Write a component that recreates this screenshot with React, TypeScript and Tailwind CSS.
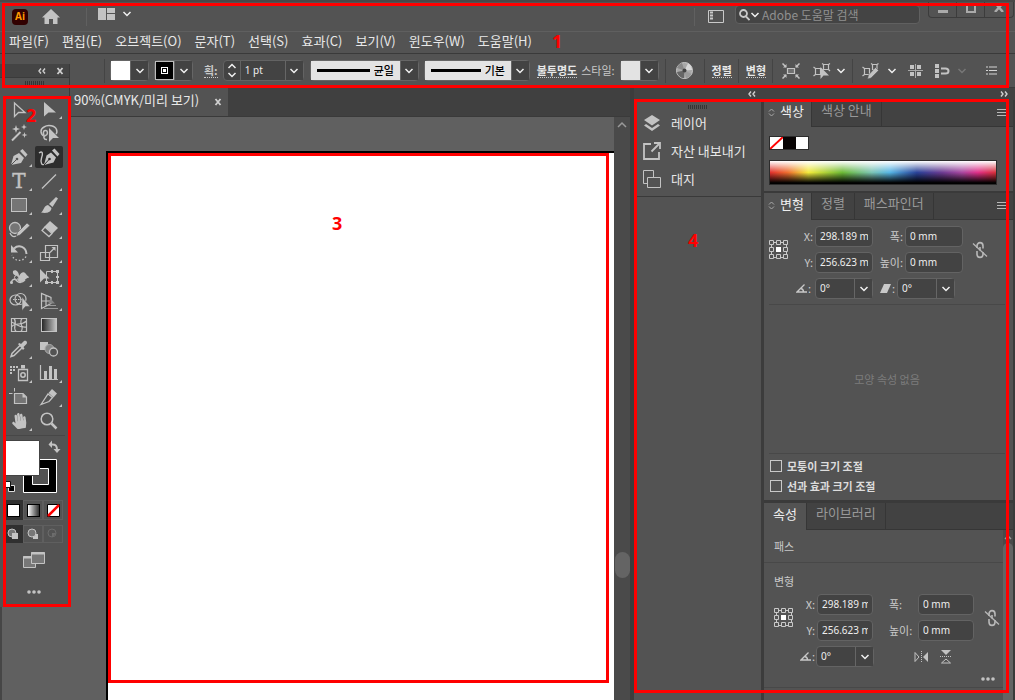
import type { ReactNode } from "react";
import clsx from "clsx";
import { FaHandPaper } from "react-icons/fa";

type Tool = {
  name: string;
  icon: ReactNode;
  more?: boolean;
  active?: boolean;
};

const C = "#c3c3c3";

const menus = [
  "파일(F)",
  "편집(E)",
  "오브젝트(O)",
  "문자(T)",
  "선택(S)",
  "효과(C)",
  "보기(V)",
  "윈도우(W)",
  "도움말(H)",
];

const tools: Tool[] = [
  {
    name: "선택 도구",
    icon: <path d="M10.5 6V19.5L14.5 15.5H21Z" fill="none" stroke={C} strokeWidth="1.3" />,
  },
  { name: "직접 선택 도구", more: true, icon: <path d="M10 5V19.5L14.5 15.5H22Z" /> },
  {
    name: "자동 선택 도구",
    icon: (
      <>
        <path d="M8 19.5L16.5 11" stroke={C} strokeWidth="2" />
        <path d="M12 4L13 7L16 8L13 9L12 12L11 9L8 8L11 7ZM20 3L20.8 5.2L23 6L20.8 6.8L20 9L19.2 6.8L17 6L19.2 5.2ZM20.500 11L21.200 13.300L23.500 14L21.200 14.700L20.500 17L19.800 14.700L17.500 14L19.800 13.300Z" />
      </>
    ),
  },
  {
    name: "올가미 도구",
    icon: (
      <>
        <path
          d="M10 15C6 13 6 8 10 6C14 3.500 21 4.500 22.500 8.500C23 10 23 12 22 13M10 14C8.500 11 10 9 12 9.500C14 10 14 14 11.500 14.500C9 15 9.500 19 13 18.500"
          fill="none"
          stroke={C}
          strokeWidth="1.500"
        />
        <path d="M15 7V21L19 17H25Z" />
      </>
    ),
  },
  {
    name: "펜 도구",
    more: true,
    icon: (
      <>
        <path d="M7 20L9.500 11L15 8L20 13L17 18Z" />
        <path d="M16 6L18.500 4L23.500 9.500L21.500 12Z" />
        <path d="M7 20L13 14" stroke="#535353" />
        <circle cx="13" cy="14" r="1.300" fill="#535353" />
      </>
    ),
  },
  {
    name: "곡률 도구",
    active: true,
    icon: (
      <>
        <path d="M5 8C9 5 9 9 7.500 13C6 18 8 21 11 19" fill="none" stroke={C} strokeWidth="1.400" />
        <path d="M10 20L12.500 10.500L17 7.500L22 12.500L19.500 17.500Z" />
        <path d="M18 5.500L20.500 3.500L25.500 9L23.500 11.500Z" />
        <path d="M10 20L15.500 14" stroke="#2d2d2d" />
        <circle cx="15.500" cy="14" r="1.300" fill="#2d2d2d" />
      </>
    ),
  },
  {
    name: "문자 도구",
    more: true,
    icon: (
      <text x="15" y="19" textAnchor="middle" fontFamily="DejaVu Serif, serif" fontSize="20" stroke={C} strokeWidth=".4">
        T
      </text>
    ),
  },
  { name: "선분 도구", more: true, icon: <path d="M8 19.500L22 5.500" stroke={C} strokeWidth="1.300" /> },
  {
    name: "사각형 도구",
    more: true,
    icon: <rect x="7.500" y="5.500" width="15" height="13" fill="#757575" stroke={C} />,
  },
  {
    name: "페인트브러쉬 도구",
    more: true,
    icon: (
      <>
        <path d="M22 4L24 5.500L18.500 14L15 11Z" />
        <path d="M14 12L17.500 15C17 20 12 20.500 7 19.500C10 18 9.500 12.500 14 12Z" />
      </>
    ),
  },
  {
    name: "Shaper 도구",
    more: true,
    icon: (
      <>
        <circle cx="11" cy="11" r="5.500" fill="#757575" stroke={C} strokeWidth="1.300" />
        <path d="M23 6L26 8.500L16 18L12 19.500L13.500 15.500Z" stroke="#535353" strokeWidth=".6" />
        <path d="M6 16C8 20 10 20 12 19" fill="none" stroke={C} strokeWidth="1.300" />
      </>
    ),
  },
  {
    name: "지우개 도구",
    more: true,
    icon: (
      <>
        <path d="M16 4L24 11L18.500 16.500L10.500 9.500Z" />
        <path d="M11 10L18 16.500L15 19.500L8 13.500Z" fill="none" stroke={C} strokeWidth="1.300" />
      </>
    ),
  },
  {
    name: "회전 도구",
    more: true,
    icon: (
      <>
        <path d="M10 7.500C15 3 22 6 22.500 13" fill="none" stroke={C} strokeWidth="2" />
        <path d="M7 4V11.500H14Z" />
        <path d="M22 15.500C19 21 10 21 8 14" fill="none" stroke={C} strokeWidth="1.300" strokeDasharray="1.500 2" />
      </>
    ),
  },
  {
    name: "크기 조절 도구",
    more: true,
    icon: (
      <g fill="none" stroke={C} strokeWidth="1.200">
        <path d="M11.500 4.500H23.500V16.500H11.500Z" />
        <path d="M6.500 11.500H15.500V19.500H6.500Z" />
        <path d="M16 11.500L20.500 7" />
        <path d="M17.500 6H21.500V10Z" fill={C} stroke="none" />
      </g>
    ),
  },
  {
    name: "폭 도구",
    more: true,
    icon: (
      <>
        <path d="M9 6C12 4 15 7 15 11C17 7 20 6 22 9C23 11 25 11 25 13C22 12 21 17 17 17C14 17 13 15 15 13C13 10 8 11 9 6Z" />
        <path d="M7 17.500C9 13 11 14 13 16C15 18 18 18 21 15" fill="none" stroke={C} strokeWidth="1.500" />
        <circle cx="12.500" cy="12.500" r="2" fill="#535353" stroke={C} />
        <circle cx="7.500" cy="17.500" r="1.500" />
      </>
    ),
  },
  {
    name: "자유 변형 도구",
    more: true,
    icon: (
      <>
        <path d="M12.500 6.500H23.500V17.500H12.500Z" fill="none" stroke={C} />
        <path d="M11 16H14V19H11ZM22 5H25V8H22ZM22 16H25V19H22ZM17 5H19V8H17ZM17 16H19V19H17ZM22 11H25V13H22Z" />
        <path d="M6 4V17.500L10 13.500H15.500Z" />
      </>
    ),
  },
  {
    name: "도형 구성 도구",
    more: true,
    icon: (
      <>
        <ellipse cx="11.500" cy="11" rx="5.500" ry="5" fill="none" stroke={C} strokeWidth="1.200" />
        <ellipse cx="16.500" cy="10" rx="5.500" ry="5.500" fill="none" stroke={C} strokeWidth="1.200" />
        <path d="M9 10.500H18" stroke={C} strokeDasharray="1.500 1" />
        <path d="M18 8V21.500L21.500 17.500H26Z" stroke="#535353" strokeWidth=".5" />
      </>
    ),
  },
  {
    name: "원근감 격자 도구",
    more: true,
    icon: (
      <>
        <path
          d="M7.500 4.500V19.500L17 14.500V8.500ZM12 6V17M7.500 12H17"
          fill="none"
          stroke={C}
          strokeWidth="1.200"
        />
        <path d="M17 10L21 14.500H14Z" fill="#858585" />
        <path d="M14 16.500H22M10 19.500H24" stroke="#999" />
      </>
    ),
  },
  {
    name: "망 도구",
    icon: (
      <path
        d="M7.500 5.500H22.500V18.500H7.500ZM7.500 14C12 8 16 14 22.500 8M10 5.500C14 10 8 14 12 18.500M18 5.500C14 10 21 14 17 18.500M7.500 9C13 11 15 15 22.500 14"
        fill="none"
        stroke={C}
        strokeWidth="1.200"
      />
    ),
  },
  {
    name: "그레이디언트 도구",
    icon: (
      <>
        <defs>
          <linearGradient id="tool-gradient">
            <stop stopColor="#222" />
            <stop offset="1" stopColor="#c8c8c8" />
          </linearGradient>
        </defs>
        <rect x="7.500" y="5.500" width="15" height="13" fill="url(#tool-gradient)" stroke={C} />
      </>
    ),
  },
  {
    name: "스포이드 도구",
    more: true,
    icon: (
      <>
        <path d="M16 8.500L8 16.500L7 19.500L10 18.500L18.500 10.500" fill="none" stroke={C} strokeWidth="1.500" />
        <path d="M14 7L15.500 6L17 7L20 4C22 3 24 5 22.500 7L19.500 10L20.500 11.500L19 13Z" />
      </>
    ),
  },
  {
    name: "블렌드 도구",
    icon: (
      <>
        <path d="M6 5H14V13H6Z" />
        <circle cx="15.500" cy="12" r="4.500" fill="#858585" stroke="#aaa" />
        <circle cx="19.500" cy="15" r="4" fill="#535353" stroke={C} strokeWidth="1.300" />
      </>
    ),
  },
  {
    name: "심볼 분무기 도구",
    more: true,
    icon: (
      <>
        <path d="M6 5H8V7H6ZM9 5H11V7H9ZM12 5H14V7H12ZM6 8H8V10H6ZM9 8H11V10H9ZM6 11H8V13H6ZM17 4H21V7.500H17Z" />
        <path d="M14.500 8.500H23.500V19.500H14.500Z" fill="none" stroke={C} strokeWidth="1.300" />
        <circle cx="19" cy="14" r="2.200" fill="none" stroke={C} strokeWidth="1.500" />
      </>
    ),
  },
  {
    name: "막대 그래프 도구",
    more: true,
    icon: (
      <>
        <path d="M6.500 4V18.500H24" fill="none" stroke={C} strokeWidth="1.200" />
        <path d="M10 10H13V18H10ZM15 5H18V18H15ZM20 8H23V18H20Z" />
      </>
    ),
  },
  {
    name: "대지 도구",
    icon: (
      <>
        <path d="M10.500 8.500H19L22.500 12V18.500H10.500Z" fill="#757575" stroke={C} strokeWidth="1.200" />
        <path d="M10.500 3V6.500M5 8.500H8.500" stroke={C} />
        <path d="M18.500 8.500L22.500 12.500H18.500Z" />
      </>
    ),
  },
  {
    name: "분할 영역 도구",
    more: true,
    icon: (
      <>
        <path d="M7 19.500L14 9L18.500 12.500L15 16.500Z" fill="none" stroke={C} strokeWidth="1.300" />
        <path d="M14.500 8L18 4L23 8.500L19.500 12.500Z" />
      </>
    ),
  },
  {
    name: "손 도구",
    more: true,
    icon: (
      <g transform="rotate(-8 15 12)">
        <FaHandPaper x="7" y="4" width="16" height="16" color={C} />
      </g>
    ),
  },
  {
    name: "돋보기 도구",
    icon: (
      <>
        <circle cx="13" cy="10" r="5.800" fill="none" stroke={C} strokeWidth="1.500" />
        <path d="M17.500 14.500L22.500 19.500" stroke={C} strokeWidth="2.500" />
      </>
    ),
  },
];

function Chevron({ up, dim }: { up?: boolean; dim?: boolean }) {
  return (
    <svg width="10" height="6" viewBox="0 0 10 6" className="shrink-0">
      <path
        d={up ? "M1.500 5L5 1.500L8.500 5" : "M1.500 1L5 4.500L8.500 1"}
        fill="none"
        stroke={dim ? "#777" : "#f0f0f0"}
        strokeWidth="1.500"
      />
    </svg>
  );
}

function Grip() {
  return (
    <svg width="20" height="4" className="mx-auto block">
      <path d="M0 2H20" stroke="#343434" strokeWidth="4" strokeDasharray="1 1" />
    </svg>
  );
}

function Close() {
  return (
    <svg width="8" height="8" viewBox="0 0 8 8">
      <path d="M1.500 1L6.500 7M6.500 1L1.500 7" stroke="#d0d0d0" strokeWidth="1.800" />
    </svg>
  );
}

function DoubleArrow({ right }: { right?: boolean }) {
  return (
    <svg width="8" height="6" viewBox="0 0 8 6">
      <path
        d={right ? "M1 0.500L3 3L1 5.500M5 0.500L7 3L5 5.500" : "M3 0.500L1 3L3 5.500M7 0.500L5 3L7 5.500"}
        fill="none"
        stroke="#d0d0d0"
        strokeWidth="1.400"
      />
    </svg>
  );
}

function Separator({ className = "h-6 bg-[#444444]" }: { className?: string }) {
  return <div className={clsx("w-px shrink-0", className)} />;
}

function DropButton({ label }: { label: string }) {
  return (
    <button
      type="button"
      aria-label={label}
      className="flex w-[18px] shrink-0 items-center justify-center self-stretch border-l border-[#666666] bg-[#434343]"
    >
      <Chevron />
    </button>
  );
}

function SwatchPicker({ label, children, className }: { label: string; children: ReactNode; className?: string }) {
  return (
    <div className={clsx("flex h-[21px] shrink-0 rounded-sm border border-[#666666]", className)}>
      {children}
      <DropButton label={label} />
    </div>
  );
}

function StrokeSelect({ label, value, className }: { label: string; value: string; className?: string }) {
  return (
    <div className={clsx("flex h-[21px] shrink-0 rounded-sm border border-[#666666]", className)}>
      <div className="flex flex-1 items-center bg-[#e3e3e3] pl-[6px] pr-1">
        <div className="h-[3px] flex-1 bg-black" />
        <select
          aria-label={label}
          className="ml-1 w-[22px] appearance-none text-[11px] font-medium text-black outline-none"
        >
          <option>{value}</option>
        </select>
      </div>
      <DropButton label={label} />
    </div>
  );
}

function Reference() {
  return (
    <svg width="20" height="20" viewBox="0 0 20 20" fill="none" stroke="#c9c9c9">
      <path d="M5 2.500H15M5 17.500H15M2.500 5V15M17.500 5V15" />
      <path
        d="M0.500 0.500H4.500V4.500H0.500ZM7.500 0.500H11.500V4.500H7.500ZM14.500 0.500H18.500V4.500H14.500ZM0.500 7.500H4.500V11.500H0.500ZM14.500 7.500H18.500V11.500H14.500ZM0.500 14.500H4.500V18.500H0.500ZM7.500 14.500H11.500V18.500H7.500ZM14.500 14.500H18.500V18.500H14.500Z"
        fill="#535353"
      />
      <path d="M7 7H12V12H7Z" fill="#fff" stroke="none" />
    </svg>
  );
}

function Unlinked() {
  return (
    <svg width="16" height="18" viewBox="0 0 16 18" fill="none" stroke="#b8b8b8" strokeWidth="1.600">
      <path d="M5 7V5C5 0.500 11 0.500 11 5V7.500M5 10V13C5 17.500 11 17.500 11 13V11M8 6V9.500" />
      <path d="M1 2.500L15 15.500" strokeWidth="1.300" />
    </svg>
  );
}

function Angle() {
  return (
    <svg width="11" height="9" viewBox="0 0 11 9" fill="none" stroke="#c9c9c9" strokeWidth="1.300" className="shrink-0">
      <path d="M8.500 0.500L1 8H11M5 4.500C7 5 7.500 6.500 7.500 8" />
    </svg>
  );
}

const inputClass =
  "h-[21px] w-full min-w-0 rounded-sm border border-[#636363] bg-[#434343] px-1 pb-[2px] font-['Noto_Sans',sans-serif] text-[10px] text-[#eeeeee] outline-none";

function AngleInput({ label, id }: { label: string; id: string }) {
  return (
    <div className="flex h-[21px] w-[58px] rounded-sm border border-[#636363] bg-[#434343]">
      <input
        id={id}
        aria-label={label}
        defaultValue="0°"
        className="w-0 flex-1 px-1 font-['Noto_Sans',sans-serif] text-[10px] text-[#eeeeee] outline-none"
      />
      <DropButton label={label} />
    </div>
  );
}

function PanelTabs({ tabs, menu, updown }: { tabs: string[]; menu?: boolean; updown?: boolean }) {
  return (
    <div className="flex h-[27px] shrink-0 bg-[#424242]">
      {tabs.map((tab, i) => (
        <button
          key={tab}
          type="button"
          className={clsx(
            "flex shrink-0 items-center gap-[5px] border-r border-[#363636] pb-[6px] text-[13px]",
            i === 0 && "bg-[#535353] text-[#eeeeee]",
            i > 0 && "border-b px-[9px] text-[#999999]",
            i === 0 && updown && "pl-1 pr-[7px]",
            i === 0 && !updown && "px-[9px]"
          )}
        >
          {i === 0 && updown && (
            <svg width="7" height="9" viewBox="0 0 7 9" className="mt-1">
              <path d="M1 3.500L3.500 1L6 3.500M1 5.500L3.500 8L6 5.500" fill="none" stroke="#aaa" />
            </svg>
          )}
          {tab}
        </button>
      ))}
      <div className="flex flex-1 items-center justify-end border-b border-[#363636] pr-[6px]">
        {menu && (
          <svg width="10" height="8" viewBox="0 0 10 8">
            <path d="M0 0.500H10M0 3.500H10M0 6.500H10" stroke="#b8b8b8" />
          </svg>
        )}
      </div>
    </div>
  );
}

function TitleBar() {
  return (
    <div className="flex h-8 items-center border-b border-t-2 border-b-[#5f5f5f] border-t-[#484848]">
      <div className="ml-3 flex h-4 w-4 items-center justify-center rounded-sm bg-[#310000] font-['Open_Sans',sans-serif] text-[10px] font-bold text-[#ff9a00]">
        Ai
      </div>
      <button type="button" aria-label="홈" className="ml-[14px]">
        <svg width="18" height="15" viewBox="0 0 18 15" fill="#c3c3c3">
          <path d="M9 0L18 8.500H15.500V15H11V10H7V15H2.500V8.500H0Z" />
        </svg>
      </button>
      <Separator className="ml-[26px] h-[18px] bg-[#606060]" />
      <button type="button" aria-label="문서 정돈" className="ml-[11px] flex items-center gap-[6px] pb-[6px]">
        <svg width="18" height="12" viewBox="0 0 18 12" fill="#c3c3c3">
          <path d="M0 0H8V12H0ZM9 0H17V5H9ZM9 6H17V12H9Z" />
        </svg>
        <Chevron />
      </button>
      <div className="flex-1" />
      <Separator className="mr-[13px] h-[18px] bg-[#606060]" />
      <button type="button" aria-label="작업 영역" className="mr-[11px]">
        <svg width="16" height="13" viewBox="0 0 16 13">
          <path d="M0.500 0.500H15.500V12.500H0.500Z" fill="none" stroke="#c9c9c9" />
          <path d="M2 2.500H5M2 5.500H5M2 8.500H5" stroke="#c9c9c9" strokeWidth="2" />
        </svg>
      </button>
      <label className="mb-1 flex h-[19px] w-[185px] items-center rounded-sm border border-[#606060] bg-[#444444] px-[3px]">
        <svg width="11" height="12" viewBox="0 0 11 12" fill="none" stroke="#c9c9c9" strokeWidth="1.800">
          <circle cx="4.500" cy="4.500" r="3.500" />
          <path d="M7 7.500L10.500 11" />
        </svg>
        <Chevron />
        <input
          aria-label="도움말 검색"
          placeholder="Adobe 도움말 검색"
          className="w-0 flex-1 pl-[2px] text-[12px] outline-none placeholder:text-[#909090]"
        />
      </label>
      <div className="ml-2 mr-px flex h-4 self-start rounded-b border border-t-0 border-[#3c3c3c]">
        <button type="button" aria-label="최소화" className="flex w-7 items-center justify-center border-r border-[#3c3c3c] pt-[3px]">
          <span className="h-[3px] w-[10px] bg-[#aaaaaa]" />
        </button>
        <button type="button" aria-label="최대화" className="flex w-7 items-start justify-center border-r border-[#3c3c3c] pt-px">
          <span className="h-[10px] w-[10px] border-2 border-[#aaaaaa]" />
        </button>
        <button type="button" aria-label="닫기" className="flex w-7 items-start justify-center pt-px">
          <svg width="10" height="9" viewBox="0 0 10 9">
            <path d="M1 0L9 9M9 0L1 9" stroke="#aaa" strokeWidth="2.500" />
          </svg>
        </button>
      </div>
    </div>
  );
}

function ControlBar() {
  return (
    <div className="flex h-[34px] items-center border-b border-[#3a3a3a] pl-[104px] text-[11px] text-[#c9c9c9]">
      <Separator />
      <SwatchPicker label="칠" className="ml-[5px]">
        <span className="w-[19px] bg-white" />
      </SwatchPicker>
      <SwatchPicker label="획 색상" className="ml-[5px]">
        <span className="flex w-[19px] items-center justify-center border border-[#bbbbbb] bg-black">
          <span className="flex h-[7px] w-[7px] items-center justify-center border border-white">
            <span className="h-[3px] w-[3px] bg-white" />
          </span>
        </span>
      </SwatchPicker>
      <label htmlFor="stroke-weight" className="ml-[11px] border-b border-dotted border-[#c9c9c9] font-bold leading-[13px]">
        획:
      </label>
      <div className="ml-[5px] flex h-[21px] w-[81px] shrink-0 rounded-sm border border-[#636363] bg-[#434343]">
        <div className="flex w-[17px] flex-col items-center justify-between border-r border-[#636363] py-[2px]">
          <Chevron up />
          <Chevron />
        </div>
        <input
          id="stroke-weight"
          defaultValue="1 pt"
          className="w-0 flex-1 px-1 font-['Noto_Sans',sans-serif] text-[10px] text-[#eeeeee] outline-none"
        />
        <DropButton label="획 두께" />
      </div>
      <StrokeSelect label="가변 폭 프로파일" value="균일" className="ml-[6px] w-[109px]" />
      <StrokeSelect label="브러쉬 정의" value="기본" className="ml-[5px] w-[106px]" />
      <button
        type="button"
        className="ml-[7px] shrink-0 border-b border-dotted border-[#c9c9c9] font-bold leading-[13px] text-[#e8e8e8]"
      >
        불투명도
      </button>
      <span className="ml-1 shrink-0">스타일:</span>
      <SwatchPicker label="스타일" className="ml-[5px]">
        <span className="w-[19px] bg-[#e3e3e3]" />
      </SwatchPicker>
      <Separator className="ml-[6px] h-6 bg-[#444444]" />
      <button type="button" aria-label="아트웍 색상 변경" className="ml-[10px]">
        <svg width="17" height="17" viewBox="0 0 17 17">
          <circle cx="8.500" cy="8.500" r="8" fill="#a8a8a8" stroke="#c9c9c9" />
          <path d="M8.500 8.500L1 6C2 3 4 1.500 6 1Z" fill="#888" />
          <path d="M8.500 8.500L8 16C5 16 2 14 1 10Z" fill="#666" />
          <path d="M8.500 8.500L12 1.500C15 3 16 6 16 8Z" fill="#d8d8d8" />
          <path d="M8.500 8.500L15.500 12C14 15 12 16 10 16Z" fill="#999" />
          <circle cx="8.500" cy="8.500" r="2" fill="#444" />
        </svg>
      </button>
      <Separator className="ml-[11px] h-6 bg-[#444444]" />
      <button
        type="button"
        className="ml-[7px] shrink-0 border-b border-dotted border-[#c9c9c9] font-bold leading-[13px] text-[#e8e8e8]"
      >
        정렬
      </button>
      <Separator className="ml-[6px] h-6 bg-[#444444]" />
      <button
        type="button"
        className="ml-[7px] shrink-0 border-b border-dotted border-[#c9c9c9] font-bold leading-[13px] text-[#e8e8e8]"
      >
        변형
      </button>
      <Separator className="ml-[6px] h-6 bg-[#444444]" />
      <button type="button" aria-label="오브젝트 격리" className="ml-[9px]">
        <svg width="18" height="16" viewBox="0 0 18 16" fill="none" stroke="#c3c3c3" strokeWidth="1.200">
          <path d="M5.500 5.500H12.500V10.500H5.500Z" fill="#707070" />
          <path d="M0.500 0.500L4 4M17.500 0.500L14 4M0.500 15.500L4 12M17.500 15.500L14 12" strokeWidth="1.500" />
          <path d="M1 4.500H4.500V1ZM17 4.500H13.500V1ZM1 11.500H4.500V15ZM17 11.500H13.500V15Z" fill="#c3c3c3" stroke="none" />
        </svg>
      </button>
      <button type="button" aria-label="유사 오브젝트 선택" className="ml-[13px] flex shrink-0 items-center gap-[5px]">
        <svg width="18" height="16" viewBox="0 0 18 16" fill="none" stroke="#c3c3c3" strokeWidth="1.200">
          <path d="M2.500 5.500H7.500V11.500H2.500ZM10.500 1.500H15.500V6.500H10.500ZM0.500 4L2.500 5.500M0.500 13L2.500 11.500M9 0.500L10.500 1.500M17 0.500L15.500 1.500M15.500 6.500L17 8" />
          <path d="M7.500 4V16L10.500 12.500H16Z" fill="#c3c3c3" stroke="none" />
        </svg>
        <Chevron />
      </button>
      <Separator className="ml-[6px] h-6 bg-[#444444]" />
      <button type="button" aria-label="패턴 편집" className="ml-[9px] flex shrink-0 items-center gap-2">
        <svg width="17" height="16" viewBox="0 0 17 16" fill="none" stroke="#c3c3c3" strokeWidth="1.200">
          <path d="M2.500 5.500H7.500V11.500H2.500ZM10.500 1.500H15V6.500H10.500ZM0.500 4L2.500 5.500M0.500 13L2.500 11.500M9 0.500L10.500 1.500M16.500 0.500L15 1.500" />
          <path d="M13.500 4.500L16.500 7.500L9 15L5.500 16L6.500 12Z" fill="#c3c3c3" stroke="#535353" strokeWidth=".5" />
        </svg>
        <Chevron />
      </button>
      <button type="button" aria-label="픽셀에 정렬" className="ml-[11px] shrink-0">
        <svg width="15" height="14" viewBox="0 0 15 14" fill="#c3c3c3">
          <path d="M2 1H6V5H2ZM9 1H13V5H9ZM2 8H6V12H2ZM9 8H13V12H9Z" />
          <path d="M7.500 0V14M0 6.500H15" stroke="#a8a8a8" />
        </svg>
      </button>
      <button type="button" aria-label="스냅 옵션" className="ml-3 flex shrink-0 items-center gap-[7px]">
        <svg width="15" height="14" viewBox="0 0 15 14" fill="#c3c3c3">
          <path d="M0 0H4V4H0ZM0 5H4V9H0ZM0 10H4V14H0Z" />
          <path d="M6 4.500H10.500C14.500 4.500 14.500 9.500 10.500 9.500H6" fill="none" stroke="#c3c3c3" strokeWidth="2" />
        </svg>
        <Chevron dim />
      </button>
      <button type="button" aria-label="컨트롤 메뉴" className="ml-auto mr-[18px] shrink-0">
        <svg width="11" height="9" viewBox="0 0 11 9">
          <path d="M0 1H2M0 4.500H2M0 8H2M3 1H11M3 4.500H11M3 8H11" stroke="#d5d5d5" strokeWidth="1.200" />
        </svg>
      </button>
    </div>
  );
}

function Toolbox() {
  return (
    <aside className="absolute left-0 top-16 w-[70px] border-r border-[#3a3a3a] bg-[#535353]">
      <div className="flex h-[14px] items-center justify-end gap-[10px] border-b border-[#3a3a3a] bg-[#444444] pr-[5px]">
        <DoubleArrow />
        <Close />
      </div>
      <div className="h-[19px] pt-[3px]">
        <Grip />
      </div>
      <div className="grid grid-cols-[30px_30px] pl-1">
        {tools.map((tool) => (
          <button key={tool.name} type="button" aria-label={tool.name} className="flex h-6 items-center justify-center">
            <svg width="30" height="24" viewBox="0 0 30 24" fill={C}>
              {tool.active && <rect x="1" y="1" width="28" height="22" rx="2" fill="#2d2d2d" />}
              {tool.icon}
              {tool.more && <path d="M28 19V22H25Z" />}
            </svg>
          </button>
        ))}
      </div>
      <div className="mx-1 mt-[2px] border-t border-[#474747]" />
      <svg width="64" height="60" viewBox="0 0 64 60" className="block">
        <path d="M23.500 23.500H56.500V56.500H23.500Z" fill="#000" stroke="#fff" />
        <path d="M32.500 32.500H48.500V48.500H32.500Z" fill="#535353" stroke="#fff" />
        <path d="M4.500 4.500H39.500V39.500H4.500Z" fill="#fff" stroke="#444" />
        <path d="M51 8.500C56 8 57 10 57 14" fill="none" stroke={C} strokeWidth="2" />
        <path d="M52 4.500L48.500 8.500L52 12ZM53.500 13H60.500L57 17Z" fill={C} />
        <path d="M8.500 49.500H14.500V55.500H8.500Z" fill="#000" stroke="#ddd" />
        <path d="M4.500 45.500H10.500V51.500H4.500Z" fill="#fff" stroke="#111" />
      </svg>
      <div className="flex pl-[3px] pt-1">
        <button type="button" aria-label="색상" className="flex h-5 w-5 items-center justify-center bg-[#303030]">
          <span className="h-[13px] w-[13px] border border-black bg-white" />
        </button>
        <button type="button" aria-label="그레이디언트" className="flex h-5 w-5 items-center justify-center border border-[#5f5f5f]">
          <span className="h-[13px] w-[13px] border border-black bg-gradient-to-r from-white to-[#333333]" />
        </button>
        <button type="button" aria-label="없음" className="flex h-5 w-5 items-center justify-center border border-[#5f5f5f]">
          <svg width="13" height="13" viewBox="0 0 13 13">
            <path d="M0.500 0.500H12.500V12.500H0.500Z" fill="#fff" stroke="#000" />
            <path d="M1 12L12 1" stroke="#f00" strokeWidth="2.500" />
          </svg>
        </button>
      </div>
      <div className="flex pl-[3px] pt-[5px]">
        {["표준 그리기", "배경 그리기", "내부 그리기"].map((mode, i) => (
          <button
            key={mode}
            type="button"
            aria-label={mode}
            className={clsx(
              "flex h-[18px] w-5 items-center justify-center border",
              i === 0 ? "border-[#303030] bg-[#303030]" : "border-[#5f5f5f]"
            )}
          >
            <svg width="12" height="12" viewBox="0 0 12 12" fill={i === 2 ? "#6c6c6c" : C}>
              {i === 1 && <path d="M6 6H11V11H6Z" />}
              <circle cx="5" cy="5" r="4" fill={i === 2 ? "#535353" : "#777"} stroke={i === 2 ? "#6c6c6c" : C} />
              {i === 0 && <path d="M5 5H11V11H5Z" />}
              {i === 2 && <path d="M5 5H9L6 9H5Z" />}
            </svg>
          </button>
        ))}
      </div>
      <button type="button" aria-label="화면 모드 변경" className="mx-auto mt-[9px] block pr-[2px]">
        <svg width="22" height="16" viewBox="0 0 22 16" className="block">
          <path d="M0.500 4.500H12.500V15.500H0.500Z" fill="#777" stroke={C} />
          <path d="M8.500 0.500H21.500V11.500H8.500Z" fill="#777" stroke={C} />
          <path d="M0 5.500H8M8 1.500H22" stroke={C} strokeWidth="2" />
        </svg>
      </button>
      <button type="button" aria-label="도구 모음 편집" className="mx-auto mt-[22px] block pb-[13px] pr-[2px]">
        <svg width="14" height="4" viewBox="0 0 14 4" fill={C} className="block">
          <circle cx="2" cy="2" r="1.800" />
          <circle cx="7" cy="2" r="1.800" />
          <circle cx="12" cy="2" r="1.800" />
        </svg>
      </button>
      {/* 도구 영역 표시 */}
      <div className="pointer-events-none absolute -right-[2px] bottom-0 left-[3px] top-8 border-[3px] border-[#ff0000]">
        <span className="absolute left-5 top-1 font-['Noto_Sans',sans-serif] text-[18px] font-bold leading-6 text-[#ff0000]">
          2
        </span>
      </div>
    </aside>
  );
}

function Document() {
  return (
    <main className="flex min-w-0 flex-1 flex-col border-r-4 border-[#3c3c3c]">
      <div className="flex h-[29px] shrink-0 border-b border-[#3a3a3a] bg-[#404040]">
        <div className="flex w-[228px] items-center justify-between bg-[#535353] pb-1 pl-[74px] pr-[6px] text-[13px] text-[#e8e8e8]">
          <span className="whitespace-nowrap">90%(CMYK/미리 보기)</span>
          <button type="button" aria-label="문서 닫기" className="pt-1">
            <Close />
          </button>
        </div>
      </div>
      <div className="flex min-h-0 flex-1">
        <div className="flex flex-1 border-l-2 border-[#464646] bg-[#606060] pl-[104px] pt-[34px]">
          <div className="relative flex-1 border-l-2 border-t-2 border-black bg-white">
            <div className="pointer-events-none absolute bottom-[17px] left-0 right-[5px] top-0 border-[3px] border-[#ff0000]">
              <span className="absolute left-[221px] top-[53px] font-['Noto_Sans',sans-serif] text-[18px] font-bold leading-7 text-[#ff0000]">
                3
              </span>
            </div>
          </div>
        </div>
        <div className="flex w-4 flex-col items-center bg-[#4a4a4a]">
          <svg width="10" height="16" viewBox="0 0 10 16">
            <path d="M1 10L5 6L9 10" fill="none" stroke="#999" strokeWidth="1.500" />
          </svg>
          <div className="grow-[420] basis-0" />
          <div className="h-[26px] w-[15px] rounded-full bg-[#646464]" />
          <div className="grow-[122] basis-0" />
        </div>
      </div>
    </main>
  );
}

function IconPanel() {
  return (
    <div className="w-[130px] shrink-0 border-r-[3px] border-[#3c3c3c] bg-[#535353] text-[13px] text-[#e8e8e8]">
      <div className="border-b border-[#3a3a3a] pb-[3px] pt-[5px]">
        <Grip />
        <button type="button" className="flex h-7 w-full items-center gap-[9px] pl-2">
          <svg width="20" height="20" viewBox="0 0 20 20" fill="#c3c3c3">
            <path d="M10 2L18 7L10 12.500L2 7ZM4 11L10 15L16 11L18 12.500L10 18L2 12.500Z" />
          </svg>
          레이어
        </button>
        <button type="button" className="flex h-7 w-full items-center gap-[9px] pl-2">
          <svg width="20" height="20" viewBox="0 0 20 20" fill="none" stroke="#c3c3c3" strokeWidth="1.800">
            <path d="M9 3H2V18H17V11M9.500 10.500L17 3" />
            <path d="M12 2H18V8" />
          </svg>
          자산 내보내기
        </button>
        <button type="button" className="flex h-7 w-full items-center gap-[9px] pl-2">
          <svg width="20" height="20" viewBox="0 0 20 20" fill="#535353" stroke="#c3c3c3">
            <path d="M1.500 1.500H11.500V14.500H1.500Z" />
            <path d="M5.500 8.500H18.500V18.500H5.500Z" />
          </svg>
          대지
        </button>
      </div>
    </div>
  );
}

function ColorPanel() {
  return (
    <section className="border-b-2 border-[#3a3a3a]">
      <PanelTabs tabs={["색상", "색상 안내"]} menu updown />
      <div className="pb-[6px] pl-[5px] pr-4 pt-[9px]">
        <div className="flex h-[14px] w-10 border border-[#2c2c2c]">
          <svg width="13" height="12" viewBox="0 0 13 12" className="bg-white">
            <path d="M0 12L13 0" stroke="#f00" strokeWidth="2" />
          </svg>
          <span className="w-[13px] bg-[#080404]" />
          <span className="flex-1 bg-white" />
        </div>
        <div className="mt-[10px] h-[25px] border border-[#2c2c2c] bg-[linear-gradient(to_right,#e0302e,#ef7030_8%,#f2ea3c_17%,#6cb936_32%,#7cc4b4_45%,#56b5e4_53%,#2a4298_65%,#6c3c92_76%,#a848a0_85%,#e03088_92%,#d83038)]">
          <div className="h-full bg-[linear-gradient(to_bottom,#ffffff,#ffffff00_50%,#00000000_50%,#000000_95%)]" />
        </div>
      </div>
    </section>
  );
}

function TransformPanel() {
  return (
    <section className="border-b-[3px] border-[#3a3a3a]">
      <PanelTabs tabs={["변형", "정렬", "패스파인더"]} menu updown />
      <div className="grid grid-cols-[20px_22px_58px_28px_58px_30px] items-center gap-x-[2px] gap-y-[5px] pl-[5px] pt-[6px] text-right text-[11px] text-[#c9c9c9]">
        <div className="row-span-2">
          <Reference />
        </div>
        <label htmlFor="tx">X:</label>
        <input id="tx" defaultValue="298.189 mm" className={inputClass} />
        <label htmlFor="tw">폭:</label>
        <input id="tw" defaultValue="0 mm" className={inputClass} />
        <div className="row-span-2 flex justify-center">
          <Unlinked />
        </div>
        <label htmlFor="ty">Y:</label>
        <input id="ty" defaultValue="256.623 mm" className={inputClass} />
        <label htmlFor="th">높이:</label>
        <input id="th" defaultValue="0 mm" className={inputClass} />
      </div>
      <div className="flex items-center py-[5px] pl-8 text-[11px] text-[#c9c9c9]">
        <label htmlFor="ta" className="mr-1 flex w-[15px] items-center gap-px">
          <Angle />:
        </label>
        <AngleInput id="ta" label="회전" />
        <label htmlFor="ts" className="ml-[7px] mr-[2px] flex w-[15px] items-center gap-px">
          <svg width="11" height="9" viewBox="0 0 11 9" className="shrink-0">
            <path d="M4 0H11L7 9H0Z" fill="#c9c9c9" />
          </svg>
          :
        </label>
        <AngleInput id="ts" label="기울이기" />
      </div>
      <div className="mr-2 ml-[5px] flex h-[150px] items-center justify-center border-y border-[#484848] text-[11px] text-[#7c7c7c]">
        모양 속성 없음
      </div>
      <div className="flex flex-col pb-1 pl-[6px] pt-[2px] text-[11px] font-bold text-[#dddddd]">
        <label className="flex h-5 items-center gap-[5px]">
          <input type="checkbox" className="h-3 w-3 appearance-none border border-[#c9c9c9]" />
          모퉁이 크기 조절
        </label>
        <label className="flex h-5 items-center gap-[5px]">
          <input type="checkbox" className="h-3 w-3 appearance-none border border-[#c9c9c9]" />
          선과 효과 크기 조절
        </label>
      </div>
    </section>
  );
}

function PropertiesPanel() {
  return (
    <section className="flex min-h-0 flex-1 flex-col">
      <PanelTabs tabs={["속성", "라이브러리"]} />
      <div className="flex flex-1">
        <div className="flex-1 text-[11px] text-[#c9c9c9]">
          <h2 className="flex h-[33px] items-center border-b border-[#484848] pl-[10px]">패스</h2>
          <h2 className="flex h-[31px] items-center pl-[10px] pt-[6px]">변형</h2>
          <div className="grid grid-cols-[20px_19px_56px_41px_56px_24px] items-center gap-x-[2px] gap-y-[5px] pl-[10px]">
            <div className="row-span-2">
              <Reference />
            </div>
            <label htmlFor="px" className="text-right">
              X:
            </label>
            <input id="px" defaultValue="298.189 mm" className={inputClass} />
            <label htmlFor="pw" className="pl-[14px]">
              폭:
            </label>
            <input id="pw" defaultValue="0 mm" className={inputClass} />
            <div className="row-span-2 flex justify-end">
              <Unlinked />
            </div>
            <label htmlFor="py" className="text-right">
              Y:
            </label>
            <input id="py" defaultValue="256.623 mm" className={inputClass} />
            <label htmlFor="ph" className="whitespace-nowrap pl-[14px]">
              높이:
            </label>
            <input id="ph" defaultValue="0 mm" className={inputClass} />
          </div>
          <div className="flex items-center pl-9 pt-[5px]">
            <label htmlFor="pa" className="mr-px flex w-[15px] items-center gap-px">
              <Angle />:
            </label>
            <AngleInput id="pa" label="회전" />
            <button type="button" aria-label="가로로 뒤집기" className="ml-10">
              <svg width="14" height="12" viewBox="0 0 14 12">
                <path d="M1 1.500L5 6L1 10.500Z" fill="none" stroke="#c3c3c3" />
                <path d="M14 1V11L9 6Z" fill="#c3c3c3" />
                <path d="M7.500 0V12" stroke="#c3c3c3" strokeDasharray="1 1" />
              </svg>
            </button>
            <button type="button" aria-label="세로로 뒤집기" className="ml-3">
              <svg width="12" height="14" viewBox="0 0 12 14">
                <path d="M1 0H11L6 5Z" fill="#c3c3c3" />
                <path d="M1.500 13L6 9L10.500 13Z" fill="none" stroke="#c3c3c3" />
                <path d="M0 6.500H12" stroke="#c3c3c3" strokeDasharray="1 1" />
              </svg>
            </button>
          </div>
          <div className="flex h-[21px] items-end justify-end border-b border-[#484848] pb-[6px] pr-2">
            <button type="button" aria-label="기타 옵션">
              <svg width="14" height="4" viewBox="0 0 14 4" fill="#c3c3c3">
                <circle cx="2" cy="2" r="1.800" />
                <circle cx="7" cy="2" r="1.800" />
                <circle cx="12" cy="2" r="1.800" />
              </svg>
            </button>
          </div>
        </div>
        <div className="flex w-[10px] flex-col items-center bg-[#4a4a4a]">
          <svg width="8" height="13" viewBox="0 0 8 13" className="shrink-0">
            <path d="M1 9L4 6L7 9" fill="none" stroke="#999" strokeWidth="1.500" />
          </svg>
          <div className="w-full flex-1 rounded-t-full bg-[#646464]" />
        </div>
      </div>
    </section>
  );
}

function Dock() {
  return (
    <aside className="relative flex w-[381px] shrink-0 flex-col">
      <div className="flex h-3 shrink-0 items-center bg-[#424242] pr-[7px]">
        <div className="flex w-[123px] justify-end pr-px">
          <DoubleArrow />
        </div>
        <div className="flex flex-1 justify-end">
          <DoubleArrow right />
        </div>
      </div>
      <div className="flex min-h-0 flex-1">
        <IconPanel />
        <div className="flex min-w-0 flex-1 flex-col border-r-2 border-[#3a3a3a]">
          <ColorPanel />
          <TransformPanel />
          <PropertiesPanel />
        </div>
      </div>
      <div className="pointer-events-none absolute bottom-[7px] left-0 right-[6px] top-[11px] border-[3px] border-[#ff0000]">
        <span className="absolute left-[51px] top-[124px] font-['Noto_Sans',sans-serif] text-[18px] font-bold leading-7 text-[#ff0000]">
          4
        </span>
      </div>
    </aside>
  );
}

export default function App() {
  return (
    <div className="relative flex h-screen flex-col overflow-hidden bg-[#535353] font-['Noto_Sans_CJK_KR',sans-serif]">
      <header className="relative shrink-0">
        <TitleBar />
        <nav className="flex h-[22px] items-center gap-[13px] border-b border-[#3a3a3a] pb-1 pl-[9px] text-[13px] text-[#e8e8e8]">
          {menus.map((menu) => (
            <button key={menu} type="button" className="shrink-0 whitespace-nowrap leading-5">
              {menu}
            </button>
          ))}
          <span className="ml-[7px] font-['Noto_Sans',sans-serif] text-[18px] font-bold leading-5 text-[#ff0000]">1</span>
        </nav>
        <ControlBar />
      </header>
      <div className="flex min-h-0 flex-1">
        <Document />
        <Dock />
      </div>
      <Toolbox />
      <div className="pointer-events-none absolute left-[2px] right-[6px] top-[3px] h-[85px] border-[3px] border-[#ff0000]" />
    </div>
  );
}
